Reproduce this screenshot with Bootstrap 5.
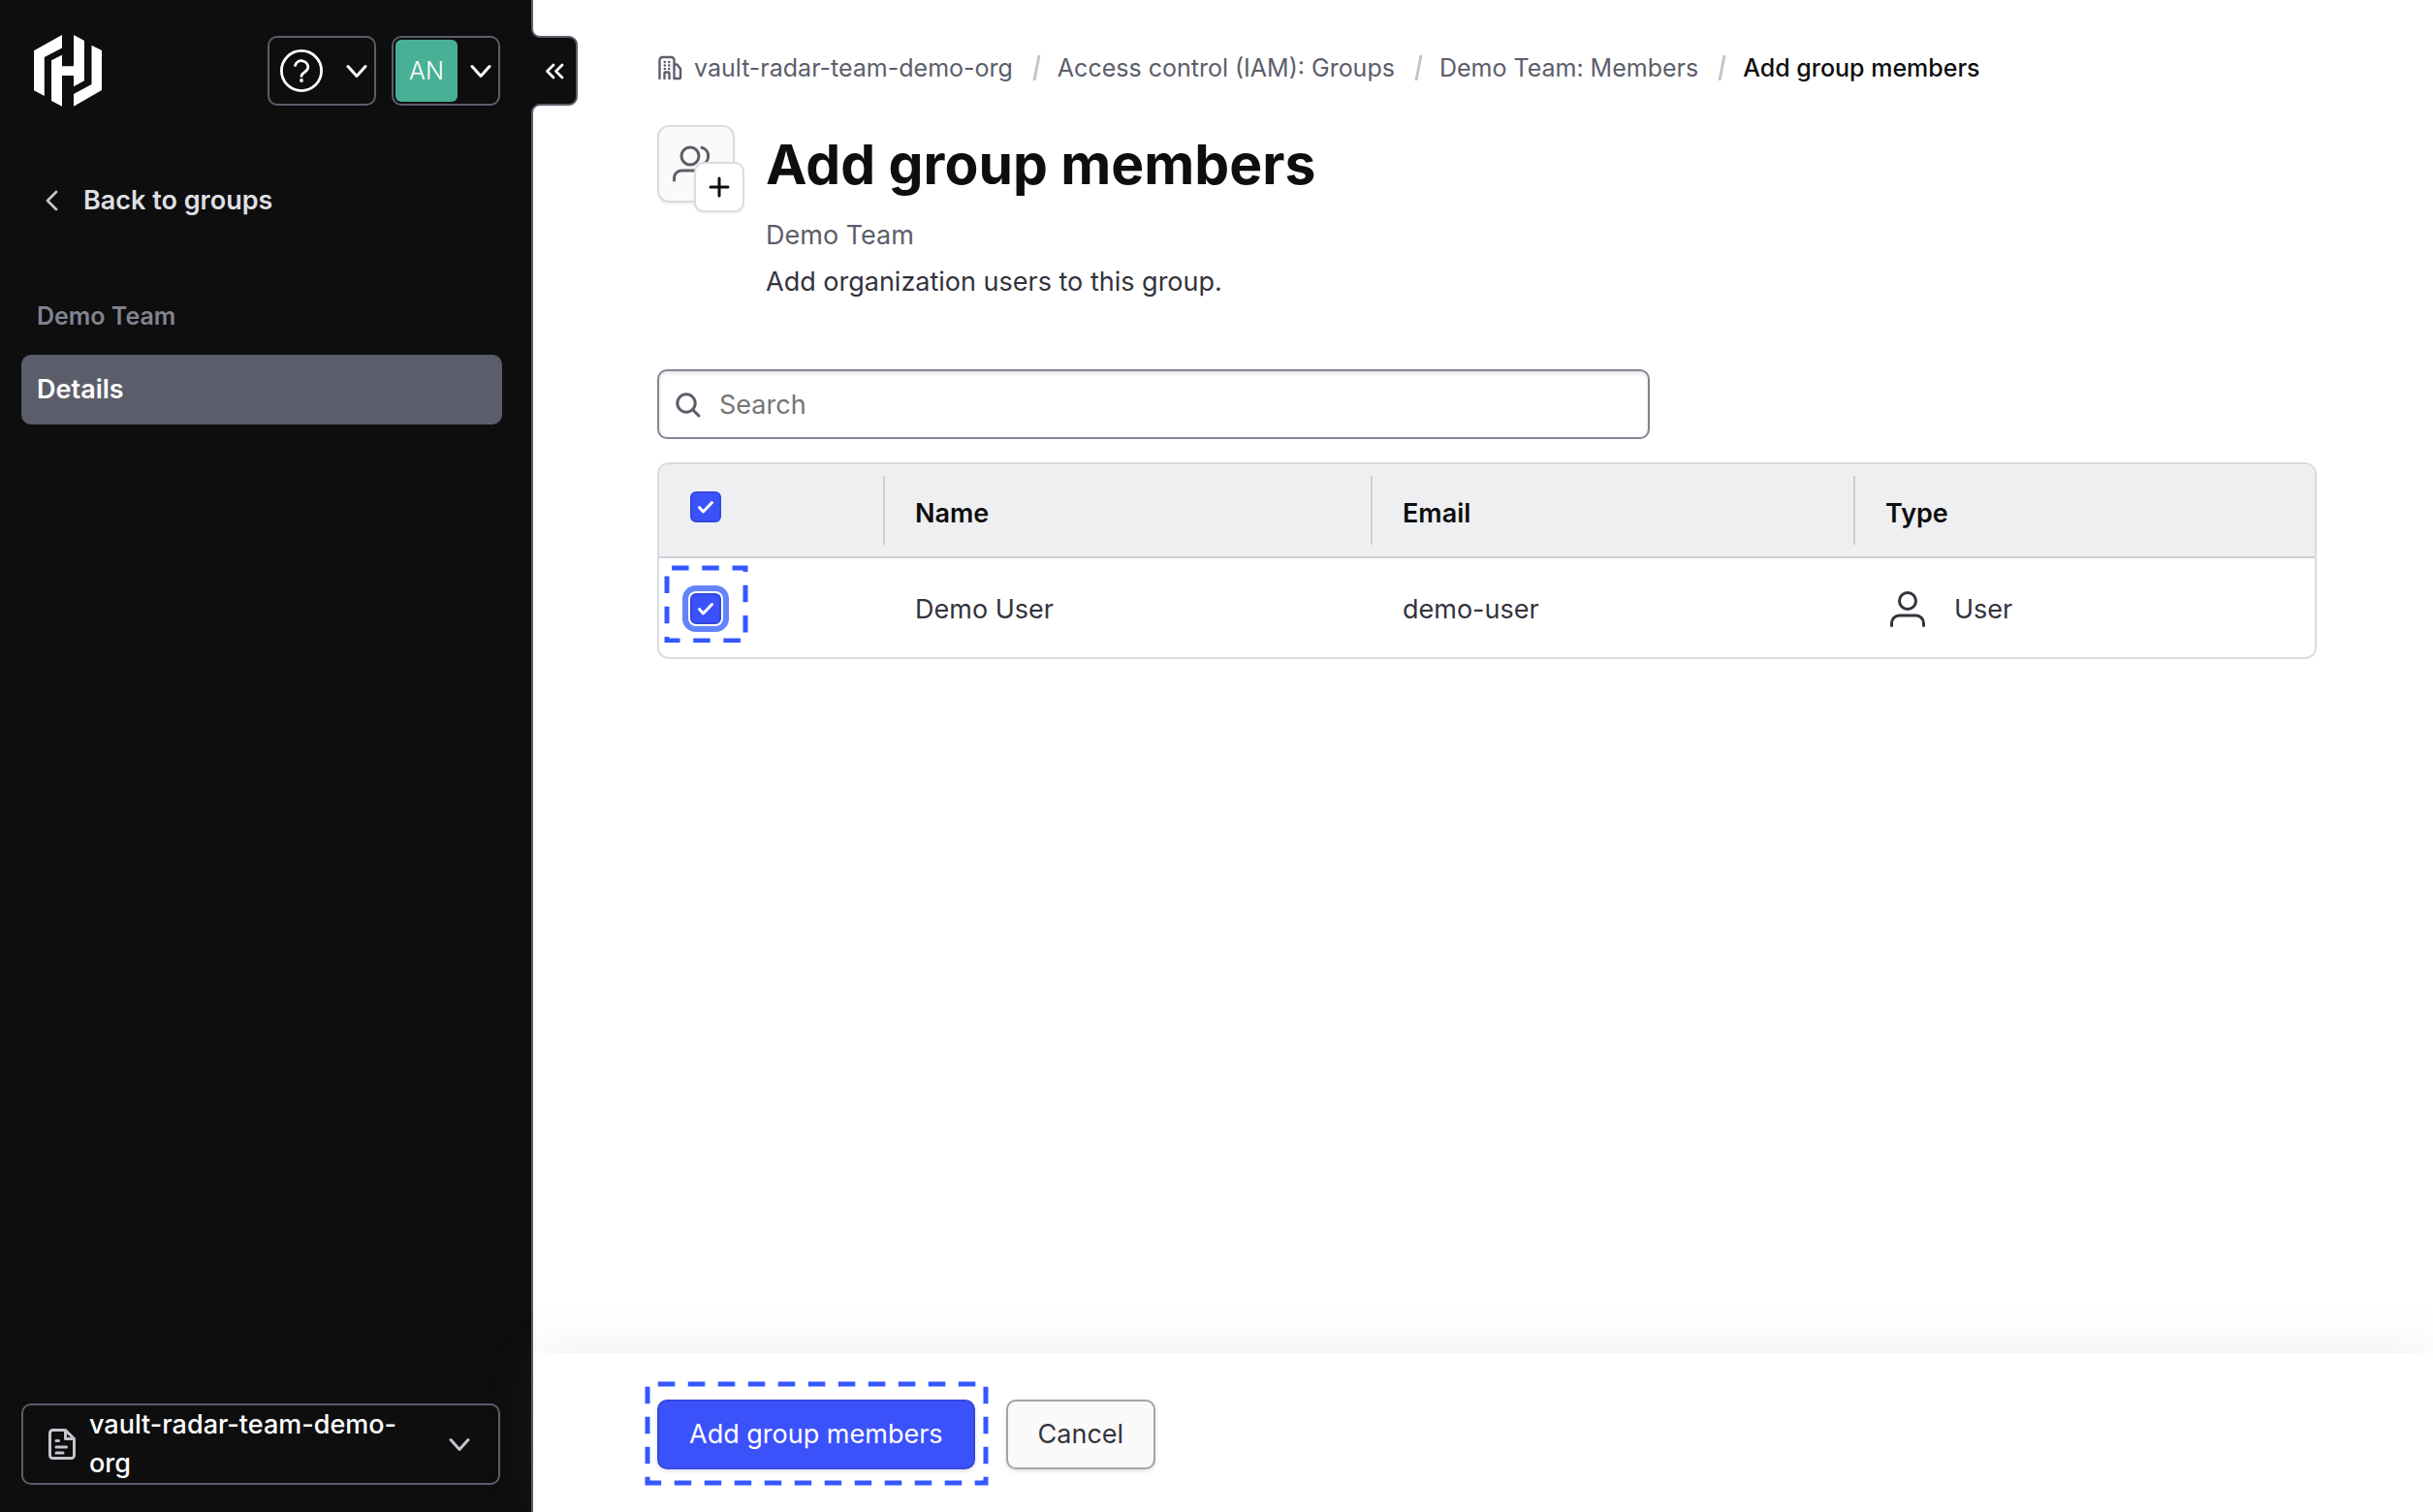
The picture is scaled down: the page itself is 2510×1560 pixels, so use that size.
<!DOCTYPE html>
<html lang="en">
<head>
<meta charset="utf-8">
<meta name="viewport" content="width=device-width, initial-scale=1">
<title>Add group members</title>
<link href="https://cdn.jsdelivr.net/npm/bootstrap@5.3.0/dist/css/bootstrap.min.css" rel="stylesheet">
<style>
:root {
  --ink: #0e0e0f;
  --strong: #33333d;
  --faint: #5b5e6a;
  --line: #dadbdf;
  --action: #3b52fb;
  --mark-blue: #3557ff;
}
body {
  font-family: Inter, "Liberation Sans", sans-serif;
  font-size: 27px;
  line-height: 40px;
  color: var(--strong);
  background: #fff;
}
svg { display: block; flex: none; }

/* Sidebar */
.side {
  width: 550px;
  padding: 36px 30px 28px 22px;
  background: var(--ink);
  border-right: 2px solid var(--faint);
}
.side-row { margin-right: 2px; }
.side-btn {
  height: 72px;
  color: #fff;
  background: transparent;
  border: 2px solid var(--faint);
  border-radius: 10px;
}
.side-menu { width: 112px; padding: 0 7px 0 10px; }
.side-account { padding-left: 2px; }
.avatar-tile {
  width: 64px;
  height: 64px;
  color: #fff;
  font-size: 25px;
  font-weight: 300;
  background: #48b094;
  border-radius: 6px;
}
.back-link {
  margin-top: 77px;
  padding: 0 24px;
  gap: 24px;
  color: #dedfe3;
  font-weight: 600;
}
.side-heading {
  margin: 79px 0 20px;
  padding: 0 16px;
  color: #82838f;
  font-size: 25px;
  line-height: 40px;
  font-weight: 600;
}
.side-item {
  padding: 16px;
  color: #fff;
  font-weight: 600;
  background: var(--faint);
  border-radius: 10px;
}
.org-btn {
  height: 84px;
  padding: 0 28px 0 24px;
  gap: 12px;
  font-weight: 500;
  line-height: 40px;
}
.org-btn span { width: 340px; }
.collapse-btn {
  position: absolute;
  top: 27px;
  left: 100%;
  width: 50px;
  height: 92px;
  z-index: 3;
}

/* Main column */
.page-body { padding: 50px 120px 0 128px; }
.breadcrumb {
  --bs-breadcrumb-item-padding-x: 0;
  font-size: 25px;
  gap: 20px;
}
.breadcrumb a { color: var(--faint); gap: 12px; }
.breadcrumb-item + .breadcrumb-item { display: flex; align-items: center; gap: 18px; }
.breadcrumb-item + .breadcrumb-item::before {
  content: "";
  width: 3px;
  height: 26px;
  padding: 0;
  margin: 0 2px 0 3px;
  background: #c2c5cb;
  transform: skewX(-11deg);
}
.crumb-now { color: var(--ink); font-weight: 500; }
.page-head { margin-top: 39px; gap: 32px; }
.icon-tile {
  width: 80px;
  height: 80px;
  background: #fafafa;
  border: 2px solid var(--line);
  border-radius: 12px;
  box-shadow: 0 2px 2px rgba(101, 106, 118, .08);
}
.plus-tile {
  right: -12px;
  bottom: -12px;
  width: 52px;
  height: 52px;
  background: #fff;
  border: 2px solid var(--line);
  border-radius: 10px;
  box-shadow: 0 2px 2px rgba(101, 106, 118, .08);
}
.page-title {
  font-size: 57px;
  line-height: 74px;
  font-weight: 700;
  color: var(--ink);
}
.sub-title { margin-top: 16px; color: var(--faint); }
.search-box { width: 1024px; max-width: 100%; margin-top: 70px; }
.search-box svg { position: absolute; left: 19px; top: 24px; }
.search-box input {
  height: 72px;
  padding: 0 20px 0 62px;
  font-size: 27px;
  border: 2px solid #828591;
  border-radius: 10px;
  box-shadow: inset 0 2px 4px rgba(101, 106, 118, .2);
}
.search-box input::placeholder { color: #757575; opacity: 1; }
.table-frame {
  margin-top: 24px;
  border: 2px solid var(--line);
  border-radius: 12px;
}
.table-frame table { table-layout: fixed; color: var(--strong); }
.table-frame th {
  position: relative;
  padding: 31px 32px 24px;
  color: var(--ink);
  font-weight: 600;
  background: #eeeff1;
  border-bottom: 2px solid #cdcfd3;
}
.table-frame th:first-child { border-top-left-radius: 10px; }
.table-frame th:last-child { border-top-right-radius: 10px; }
.table-frame th + th::before {
  content: "";
  position: absolute;
  left: -1px;
  top: 12px;
  width: 2px;
  height: 71px;
  background: #cdcfd3;
}
.table-frame td { padding: 33px 32px 29px; border: 0; }
.pick-col { width: 232px; }
.name-col { width: 503px; }
.email-col { width: 498px; }
.table-frame .form-check-input {
  width: 32px;
  height: 32px;
  margin: 0;
  border: 2px solid #3448dd;
  border-radius: 6px;
  background-color: var(--action);
  background-size: 28px;
  background-image: url("data:image/svg+xml,%3csvg xmlns='http://www.w3.org/2000/svg' viewBox='0 0 28 28'%3e%3cpath fill='none' stroke='%23fff' stroke-width='3' stroke-linecap='round' stroke-linejoin='round' d='m7.500 14.500 4 4.500 9-9.500'/%3e%3c/svg%3e");
}
.pick-cell { height: 32px; }
.table-frame th:first-child { padding: 28px 32px 35px; vertical-align: top; }
.table-frame td:first-child { padding: 36px 32px 34px; vertical-align: top; }
.table-frame td .form-check-input { box-shadow: 0 0 0 2px #fff, 0 0 0 8px #6484fb; }
.user-type { gap: 25px; }
.mark-frame { position: absolute; pointer-events: none; fill: none; stroke: var(--mark-blue); stroke-width: 5; }
.mark-pick { left: -29px; top: -31px; }
.mark-submit { left: -13px; top: -19px; }

/* Footer bar */
.action-bar {
  position: sticky;
  bottom: 0;
  padding: 48px 128px 44px;
  gap: 32px;
  background: #fff;
  box-shadow: 0 0 56px rgba(97, 104, 117, .12);
  z-index: 2;
}
.action-bar .btn {
  height: 72px;
  padding: 0 31px;
  font-size: 27px;
  line-height: 40px;
  border-width: 2px;
  border-radius: 10px;
  box-shadow: 0 2px 4px rgba(101, 106, 118, .2);
}
.btn-main { color: #fff; background: var(--action); border-color: #3449e0; }
.btn-quiet { color: var(--strong); background: #fafafa; border-color: #a3a4a9; }
</style>
</head>
<body>
<div class="d-flex min-vh-100">

  <aside class="side d-flex flex-column flex-shrink-0 position-relative">
    <div class="side-row d-flex align-items-center">
      <a href="#" class="me-auto ps-2 ms-1" aria-label="Home">
        <svg width="72" height="74" viewBox="-1 0 72 74" fill="#fff"><path d="M29 0v13.500L10.800 23v40L0 57.300V16.300zM41 73.700V61l18.500-10V10.700L70 16v41zM18 26.300 29 20.700V32.300H41V0L52 6v41.300l-11 6V42H29v31.700L18 68z"/></svg>
      </a>
      <button type="button" class="side-btn side-menu d-flex align-items-center justify-content-between me-3" aria-label="Help">
        <svg width="46" height="46" viewBox="0 0 46 46" fill="none" stroke="#fff" stroke-width="2.800" stroke-linecap="round"><circle cx="23" cy="23" r="20.600"/><path d="M16.500 17.500a6.800 6.800 0 0 1 13.300 2c0 4.500-6.800 5.500-6.800 9"/><circle cx="23" cy="33" r="1.900" fill="#fff" stroke="none"/></svg>
        <svg width="22" height="22" viewBox="0 0 22 22" fill="none" stroke="#fff" stroke-width="3" stroke-linecap="round" stroke-linejoin="round"><path d="m2 6.500 9 10 9-10"/></svg>
      </button>
      <button type="button" class="side-btn side-menu side-account d-flex align-items-center justify-content-between" aria-label="Account">
        <span class="avatar-tile d-flex align-items-center justify-content-center">AN</span>
        <svg width="22" height="22" viewBox="0 0 22 22" fill="none" stroke="#fff" stroke-width="3" stroke-linecap="round" stroke-linejoin="round"><path d="m2 6.500 9 10 9-10"/></svg>
      </button>
    </div>

    <a href="#" class="back-link d-flex align-items-center text-decoration-none">
      <svg width="16" height="24" viewBox="0 0 16 24" fill="none" stroke="#c2c5cb" stroke-width="2.800" stroke-linecap="round" stroke-linejoin="round"><path d="m12 3-9 9 9 9"/></svg>
      <span>Back to groups</span>
    </a>

    <h2 class="side-heading">Demo Team</h2>
    <nav><a href="#" class="side-item d-block text-decoration-none" aria-current="page">Details</a></nav>

    <button type="button" class="side-btn org-btn side-row d-flex align-items-center text-start mt-auto">
      <svg width="32" height="34" viewBox="0 0 32 34" fill="none" stroke="#c2c5cb" stroke-width="3" stroke-linecap="round" stroke-linejoin="round"><path d="M19.500 2.500H6.500a3 3 0 0 0-3 3v23a3 3 0 0 0 3 3h19a3 3 0 0 0 3-3V11.500zM19.500 3v8.500H28M10 13.500h2.500M10 20h10.500M10 26h7"/></svg>
      <span>vault-radar-team-demo-org</span>
      <svg class="ms-auto" width="24" height="24" viewBox="0 0 24 24" fill="none" stroke="#c2c5cb" stroke-width="3" stroke-linecap="round" stroke-linejoin="round"><path d="m3 7.500 9 10 9-10"/></svg>
    </button>

    <button type="button" class="collapse-btn border-0 p-0 bg-transparent" aria-label="Collapse sidebar">
      <svg width="50" height="92" viewBox="0 0 50 92"><path fill="#0e0e0f" d="M0 3h2v86H0z"/><path fill="#0e0e0f" stroke="#5b5e6a" stroke-width="2" d="M1 0v3a8 8 0 0 0 8 8h30a8 8 0 0 1 8 8v54a8 8 0 0 1-8 8H9a8 8 0 0 0-8 8v3"/><path fill="none" stroke="#fff" stroke-width="2.800" stroke-linecap="round" stroke-linejoin="round" d="m23 40-6.500 6.500L23 53M32 40l-6.500 6.500L32 53"/></svg>
    </button>
  </aside>

  <div class="d-flex flex-column flex-grow-1">
    <main class="page-body flex-grow-1">
      <nav aria-label="Breadcrumb">
        <ol class="breadcrumb mb-0">
          <li class="breadcrumb-item"><a href="#" class="d-flex align-items-center text-decoration-none">
            <svg width="26" height="26" viewBox="0 0 26 26" fill="none" stroke="#5b5e6a" stroke-width="2.400" stroke-linecap="round" stroke-linejoin="round"><path d="M2.500 24V5a3 3 0 0 1 3-3h9a3 3 0 0 1 3 3v19h5.500a1 1 0 0 0 1-1V14l-3.500-4.500h-3M7.500 24v-5.500a1 1 0 0 1 1-1h3a1 1 0 0 1 1 1V24"/><path stroke-width="2.600" d="M7.800 7h.01M12.200 7h.01M7.800 10.500h.01M12.200 10.500h.01M7.800 14h.01M12.200 14h.01"/></svg>
            <span>vault-radar-team-demo-org</span></a></li>
          <li class="breadcrumb-item"><a href="#" class="text-decoration-none">Access control (IAM): Groups</a></li>
          <li class="breadcrumb-item"><a href="#" class="text-decoration-none">Demo Team: Members</a></li>
          <li class="breadcrumb-item crumb-now" aria-current="page">Add group members</li>
        </ol>
      </nav>

      <header class="page-head d-flex align-items-start">
        <div class="icon-tile position-relative d-flex align-items-center justify-content-center flex-shrink-0">
          <svg width="48" height="48" viewBox="0 0 48 48" fill="none" stroke="#5b5e6a" stroke-width="3" stroke-linecap="round" stroke-linejoin="round"><circle cx="18" cy="16" r="9"/><path d="M1.500 41v-2.500A7.500 7.500 0 0 1 9 31h18a7.500 7.500 0 0 1 7.500 7.500V41M30 7.300a9 9 0 0 1 0 17.400M38 31.500a8 8 0 0 1 5.500 7.500v2"/></svg>
          <span class="plus-tile position-absolute d-flex align-items-center justify-content-center">
            <svg width="24" height="24" viewBox="0 0 24 24" fill="none" stroke="#0e0e0f" stroke-width="3" stroke-linecap="round"><path d="M12 3v18M3 12h18"/></svg>
          </span>
        </div>
        <div class="pt-1">
          <h1 class="page-title mb-0">Add group members</h1>
          <p class="sub-title mb-2">Demo Team</p>
          <p class="mb-0">Add organization users to this group.</p>
        </div>
      </header>

      <div class="search-box position-relative">
        <svg width="26" height="26" viewBox="0 0 26 26" fill="none" stroke="#5b5e6a" stroke-width="3" stroke-linecap="round"><circle cx="11" cy="11" r="9.200"/><path d="m18 18 6 6"/></svg>
        <input type="search" class="form-control" placeholder="Search" aria-label="Search">
      </div>

      <div class="table-frame">
        <table class="table mb-0">
          <colgroup><col class="pick-col"><col class="name-col"><col class="email-col"><col></colgroup>
          <thead>
            <tr>
              <th scope="col"><div class="pick-cell d-flex"><input class="form-check-input" type="checkbox" checked aria-label="Select all rows"></div></th>
              <th scope="col">Name</th>
              <th scope="col">Email</th>
              <th scope="col">Type</th>
            </tr>
          </thead>
          <tbody>
            <tr>
              <td><div class="pick-cell d-flex position-relative"><input class="form-check-input" type="checkbox" checked aria-label="Select Demo User">
                <svg class="mark-frame mark-pick" width="92" height="82" viewBox="0 0 92 82"><path stroke-dasharray="17.500 13.700" stroke-dashoffset="4" d="M5 80H86V5H5z"/></svg></div></td>
              <td>Demo User</td>
              <td>demo-user</td>
              <td><div class="user-type d-flex align-items-center"><svg width="46" height="40" viewBox="0 0 46 40" fill="none" stroke="#33333d" stroke-width="3" stroke-linecap="round"><circle cx="23" cy="11" r="8.500"/><path d="M6.500 36.500V34a8 8 0 0 1 8-8h17a8 8 0 0 1 8 8v2.500"/></svg><span>User</span></div></td>
            </tr>
          </tbody>
        </table>
      </div>
    </main>

    <footer class="action-bar d-flex">
      <div class="position-relative">
        <button type="submit" class="btn btn-main">Add group members</button>
        <svg class="mark-frame mark-submit" width="356" height="110" viewBox="0 0 356 110"><path stroke-dasharray="17.500 13.500" stroke-dashoffset="3.300" d="M3 105H352V3H3z"/></svg>
      </div>
      <button type="button" class="btn btn-quiet">Cancel</button>
    </footer>
  </div>
</div>
<script src="https://cdn.jsdelivr.net/npm/bootstrap@5.3.0/dist/js/bootstrap.bundle.min.js"></script>
</body>
</html>
